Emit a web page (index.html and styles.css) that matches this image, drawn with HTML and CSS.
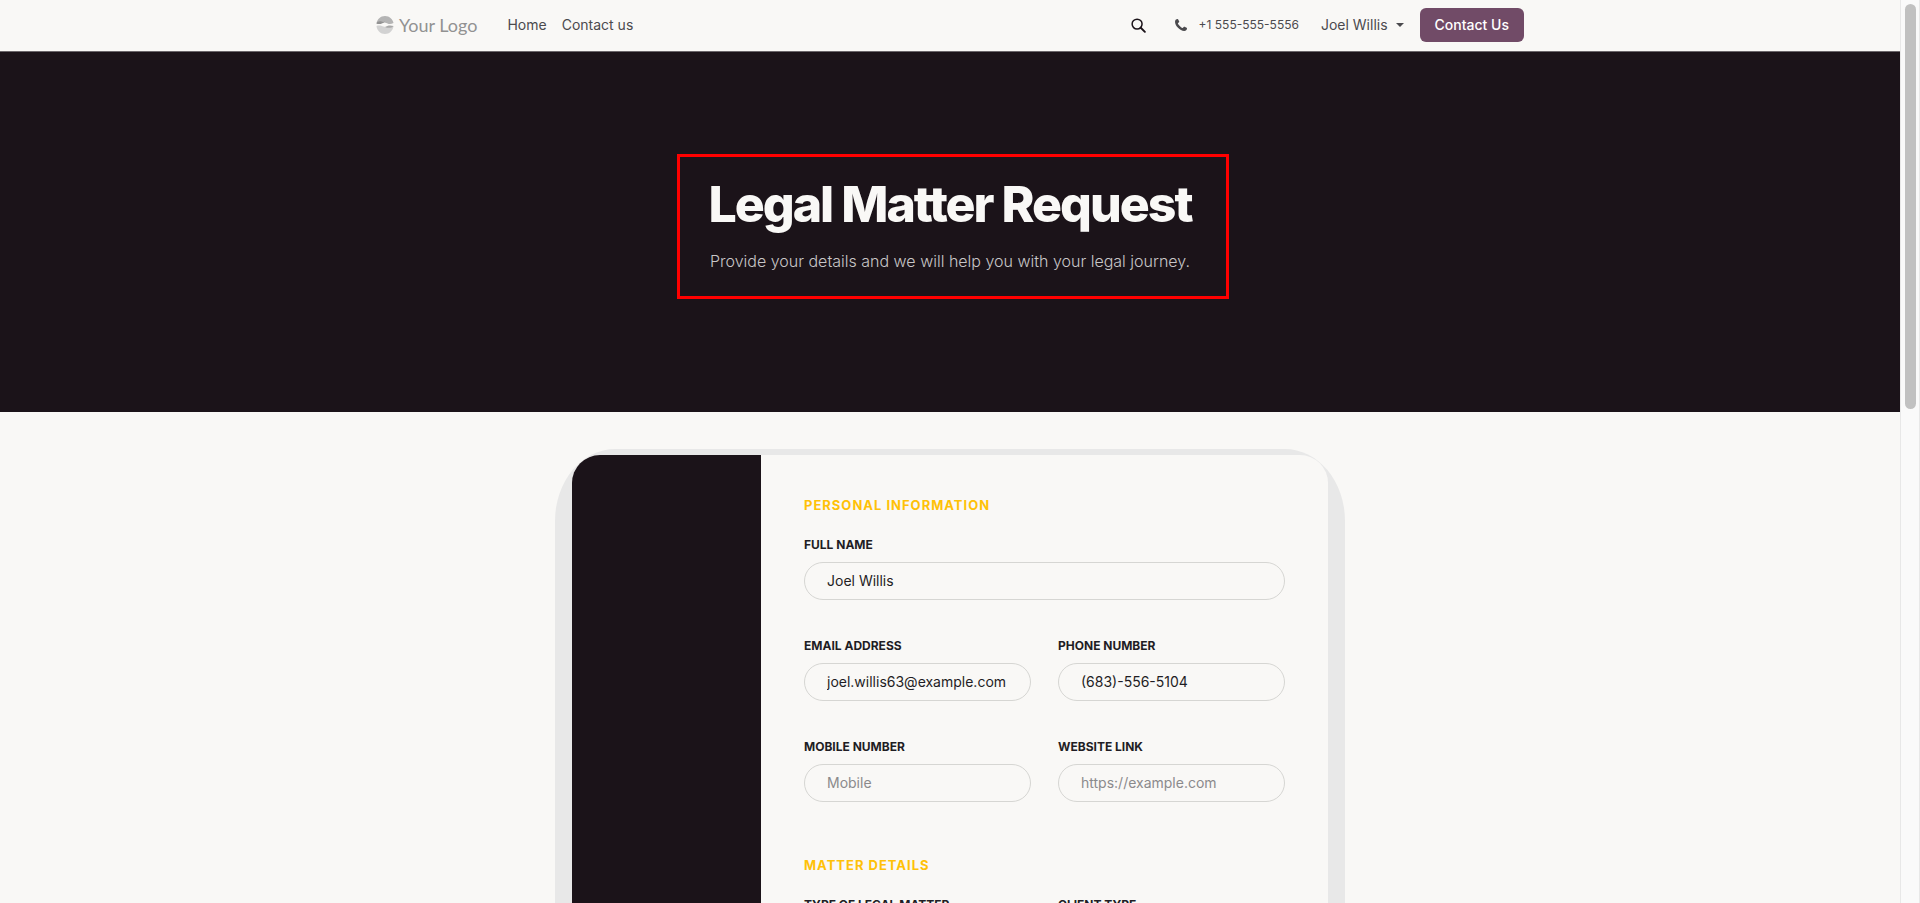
FILE: index.html
```html
<!DOCTYPE html>
<html lang="en">
<head>
    <meta charset="UTF-8">
    <meta name="viewport" content="width=device-width, initial-scale=1.0">
    <title>Legal Matter Request</title>
    <link rel="stylesheet" href="styles.css">
</head>
<body>
    <div class="page">
        <header class="navbar">
            <div class="container">
                <a class="brand" href="#">
                    <svg class="brand-mark" viewBox="0 0 36 36" aria-hidden="true">
                        <path fill="#b4b4b4" d="M1 15C2 7 9 0 18 0s16 7 17 14c-4 2-8 3-12 1-5-2-8-3-13-1-3 1-6 2-9 1z"/>
                        <path fill="#929292" d="M1 15c1-4 6-5 10-4 3 1 5 1 7 0-3 4-12 7-17 4z"/>
                        <path fill="#d2d2d2" d="M1 20c5-2 10 0 14 1 7 2 13 1 20-1-1 9-8 16-17 16S2 29 1 20z"/>
                        <path fill="#a8a8a8" d="M18 22c4-3 11-4 17-2-3 4-11 5-17 2z"/>
                    </svg>
                    <span>Your Logo</span>
                </a>
                <nav class="nav-links">
                    <a href="#">Home</a>
                    <a href="#">Contact us</a>
                </nav>
                <div class="nav-tools">
                    <button class="search-button" type="button" aria-label="Search">
                        <svg viewBox="0 0 16 16" aria-hidden="true">
                            <circle cx="6.5" cy="6.5" r="5.3" fill="none" stroke="currentColor" stroke-width="1.6"/>
                            <path d="M10.4 10.4l4.4 4.4" stroke="currentColor" stroke-width="2" stroke-linecap="round"/>
                        </svg>
                    </button>
                    <a class="phone" href="tel:+15555555556">
                        <svg viewBox="0 0 12 12" aria-hidden="true">
                            <path fill="currentColor" d="M12 9.3c0 .5-.3 1.5-.6 1.8-.5.5-1.4.9-2.2.9C5 12 0 6.800 0 2.800 0 2 .4 1.100.9.600 1.300.2 2.200 0 2.700 0c.2 0 .3.100 1.400 2.300.3.500.200.700-.1 1-.5.500-1.100.900-1.100 1.200 0 .8 3.600 4.500 4.600 4.500.3 0 .8-.7 1.200-1.100.3-.3.500-.3 1-.1C11.9 8.900 12 9.100 12 9.300z"/>
                        </svg>
                        <span>+1 555-555-5556</span>
                    </a>
                    <button class="user-menu" type="button">Joel Willis</button>
                    <a class="cta" href="#">Contact Us</a>
                </div>
            </div>
        </header>

        <section class="hero">
            <h1>Legal Matter Request</h1>
            <p>Provide your details and we will help you with your legal journey.</p>
            <div class="highlight"></div>
        </section>

        <main class="form-shade">
            <div class="form-card">
                <div class="form-side"></div>
                <form class="form-body">
                    <h2>Personal Information</h2>
                    <div class="fields">
                        <div class="field wide">
                            <label for="full-name">Full Name</label>
                            <input type="text" id="full-name" value="Joel Willis">
                        </div>
                        <div class="field">
                            <label for="email">Email Address</label>
                            <input type="email" id="email" value="joel.willis63@example.com">
                        </div>
                        <div class="field">
                            <label for="phone">Phone Number</label>
                            <input type="tel" id="phone" value="(683)-556-5104">
                        </div>
                        <div class="field">
                            <label for="mobile">Mobile Number</label>
                            <input type="tel" id="mobile" placeholder="Mobile">
                        </div>
                        <div class="field">
                            <label for="website">Website Link</label>
                            <input type="url" id="website" placeholder="https://example.com">
                        </div>
                    </div>

                    <h2>Matter Details</h2>
                    <div class="fields">
                        <div class="field">
                            <label for="matter-type">Type of Legal Matter</label>
                            <input type="text" id="matter-type">
                        </div>
                        <div class="field">
                            <label for="client-type">Client Type</label>
                            <input type="text" id="client-type">
                        </div>
                    </div>
                </form>
            </div>
        </main>
    </div>
    <div class="scroll-track"><div class="scroll-thumb"></div></div>
</body>
</html>
```
FILE: styles.css
```css
:root {
    --paper: #f9f8f6;
    --ink: #1b1319;
    --text: #1f1d24;
    --muted: #4b4a4e;
    --plum: #714b67;
    --gold: #ffc107;
    --shade: #e8e8e8;
}

* {
    box-sizing: border-box;
}

body {
    display: flex;
    height: 100vh;
    margin: 0;
    overflow: hidden;
    background: var(--paper);
    color: var(--text);
    font-family: Inter, "Liberation Sans", sans-serif;
    font-size: 14px;
    line-height: 20px;
}

a {
    color: inherit;
    text-decoration: none;
}

button {
    padding: 0;
    border: none;
    background: none;
    color: inherit;
    font: inherit;
    cursor: pointer;
}

.page {
    flex: 1;
    min-width: 0;
    overflow: hidden;
}

/* navbar */
.navbar {
    padding-bottom: 1px;
    border-bottom: 1px solid #6b666a;
    color: var(--muted);
}

.container {
    display: flex;
    align-items: center;
    max-width: 1148px;
    height: 50px;
    margin: 0 auto;
}

.brand {
    display: flex;
    align-items: center;
    gap: 5px;
    color: #929292;
    font-family: Lato, sans-serif;
    font-size: 18px;
}

.brand-mark {
    width: 18px;
    height: 18px;
}

.nav-links {
    display: flex;
    gap: 15px;
    margin-left: 30px;
}

.nav-tools {
    display: flex;
    align-items: center;
    margin-left: auto;
}

.search-button {
    color: var(--ink);
}

.search-button svg {
    display: block;
    width: 15px;
    height: 15px;
}

.phone {
    display: flex;
    align-items: center;
    gap: 12px;
    margin: 0 22px 0 29px;
    font-size: 12px;
}

.phone svg {
    width: 12px;
    height: 12px;
}

.user-menu {
    display: flex;
    align-items: center;
    gap: 8px;
}

.user-menu::after {
    content: "";
    border: 4px solid transparent;
    border-top-color: currentColor;
    border-bottom: 0;
}

.cta {
    margin-left: 16px;
    padding: 7px 15px;
    border-radius: 6px;
    background: var(--plum);
    color: #fff;
    font-weight: 500;
}

/* hero */
.hero {
    position: relative;
    padding: 122px 20px 139px;
    background: var(--ink);
    color: var(--paper);
    text-align: center;
}

.hero h1 {
    margin: 0 0 15px;
    font-size: 50px;
    font-weight: 800;
    line-height: 60px;
    letter-spacing: -2px;
}

.hero p {
    margin: 0;
    color: #c8c6c7;
    font-size: 16px;
    font-weight: 300;
    line-height: 24px;
}

.highlight {
    position: absolute;
    top: 102px;
    left: calc(50% - 273px);
    width: 552px;
    height: 145px;
    border: 3px solid #f00;
}

/* form */
.form-shade {
    max-width: 790px;
    margin: 37px auto 0;
    padding: 6px 17px;
    border-radius: 60px / 72px;
    background: var(--shade);
}

.form-card {
    display: grid;
    grid-template-columns: 1fr 3fr;
    overflow: hidden;
    border-radius: 28px;
    background: var(--paper);
}

.form-side {
    background: var(--ink);
}

.form-body {
    padding: 40px 43px;
}

.form-body h2 {
    margin: 0 0 20px;
    color: var(--gold);
    font-size: 13px;
    font-weight: 700;
    line-height: 20px;
    letter-spacing: 1px;
    text-transform: uppercase;
}

.fields {
    display: grid;
    grid-template-columns: 1fr 1fr;
    gap: 36px 27px;
    margin-bottom: 53px;
}

.wide {
    grid-column: 1 / -1;
}

.field label {
    display: block;
    margin-bottom: 7px;
    font-size: 12px;
    font-weight: 700;
    text-transform: uppercase;
}

.field input {
    display: block;
    width: 100%;
    height: 38px;
    padding: 0 22px 2px;
    border: 1px solid #d6d6d3;
    border-radius: 19px;
    background: transparent;
    color: var(--text);
    font: inherit;
}

.field input::placeholder {
    color: #8b8a8c;
}

/* scroll rail */
.scroll-track {
    flex: none;
    width: 20px;
    padding: 4px;
    border: 1px solid #e8e8e8;
    border-width: 0 1px;
    background: #fafafa;
}

.scroll-thumb {
    width: 11px;
    height: 405px;
    border-radius: 6px;
    background: #c1c1c1;
}
```
